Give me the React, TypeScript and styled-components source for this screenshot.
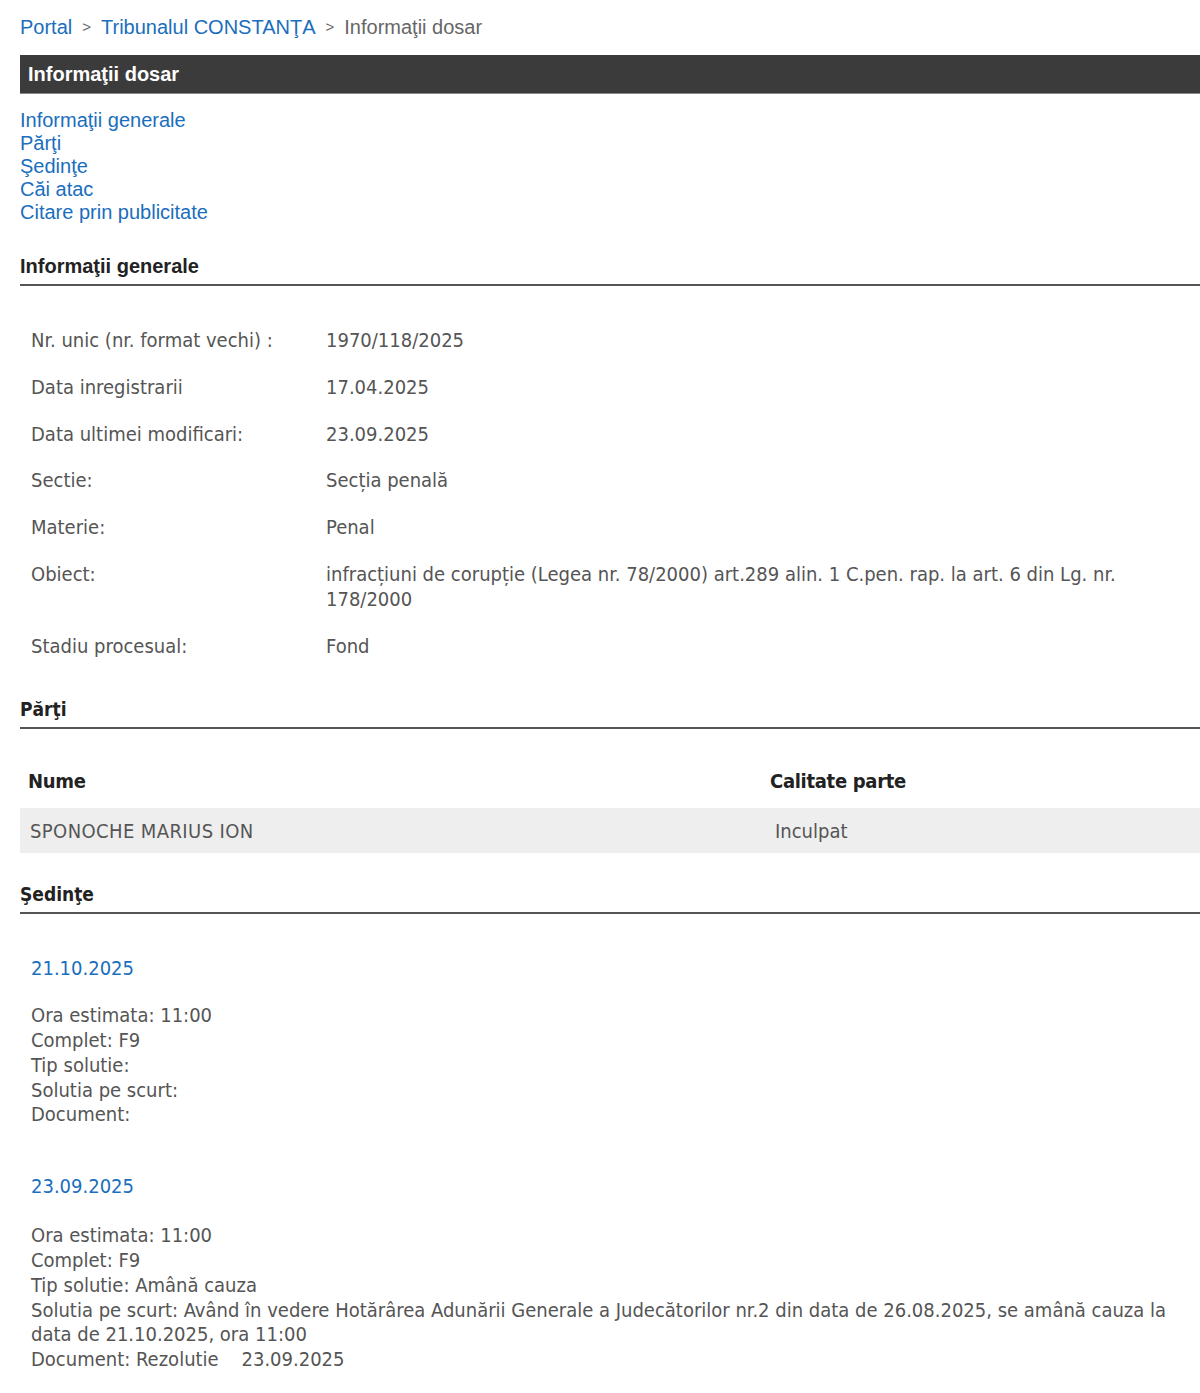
import styled, { createGlobalStyle } from "styled-components";

const GlobalStyle = createGlobalStyle`
  body {
    margin: 0;
    background: #fff;
    font-family: "Liberation Sans", Arial, sans-serif;
  }
`;

const contentFont = `"DejaVu Sans Condensed", "DejaVu Sans", sans-serif`;
const headFont = `"Liberation Sans", Arial, sans-serif`;

const Page = styled.div`
  padding: 14px 0 20px 20px;
  overflow: hidden;
`;

const Breadcrumb = styled.div`
  display: flex;
  align-items: center;
  gap: 10px;
  font-size: 20px;
  line-height: 26px;
  color: #666;
`;

const CrumbLink = styled.a`
  color: #1a6ebd;
  text-decoration: none;
`;

const Sep = styled.span`
  font-size: 15px;
  color: #666;
`;

const TitleBar = styled.div`
  margin-top: 15px;
  height: 38px;
  background: #3c3b3b;
  border-bottom: 1px solid #8a8a8a;
  color: #fff;
  font-size: 20px;
  font-weight: bold;
  line-height: 38px;
  padding-left: 8px;
`;

const Nav = styled.nav`
  display: flex;
  flex-direction: column;
  margin-top: 15px;
`;

const NavLink = styled.a`
  color: #1a6ebd;
  text-decoration: none;
  font-size: 20px;
  line-height: 23px;
`;

const SectionTitle = styled.h2<{ $top: number; $alt?: boolean }>`
  margin: ${(p) => p.$top}px 0 0;
  padding-bottom: 6px;
  border-bottom: 2px solid #555;
  font-size: ${(p) => (p.$alt ? 19 : 20)}px;
  font-weight: bold;
  line-height: 24px;
  color: #222;
  font-family: ${(p) => (p.$alt ? contentFont : headFont)};
`;

const InfoTable = styled.div`
  display: grid;
  grid-template-columns: 295px 1fr;
  padding: 31px 0 0 11px;
  font-family: ${contentFont};
  font-size: 20px;
  line-height: 25px;
  color: #555;
`;

const Cell = styled.div<{ $label?: boolean }>`
  padding: 11px ${(p) => (p.$label ? 0 : 60)}px 10.75px 0;
  white-space: ${(p) => (p.$label ? "nowrap" : "normal")};
`;

const PartyHead = styled.div`
  display: grid;
  grid-template-columns: 742px 1fr;
  margin-top: 39px;
  padding: 0 0 0 8px;
  font-family: ${contentFont};
  font-size: 20px;
  font-weight: bold;
  line-height: 26px;
  color: #222;
  letter-spacing: -0.3px;
`;

const PartyRow = styled.div`
  display: grid;
  grid-template-columns: 742px 1fr;
  margin-top: 14px;
  height: 45px;
  align-items: center;
  padding-left: 10px;
  background: #eee;
  font-family: ${contentFont};
  font-size: 20px;
  color: #555;
  letter-spacing: 0.4px;

  & > span + span {
    padding-left: 3px;
    letter-spacing: 0;
  }
`;

const Hearing = styled.div<{ $top: number }>`
  margin-top: ${(p) => p.$top}px;
  padding-left: 11px;
  font-family: ${contentFont};
  color: #555;
`;

const HearingDate = styled.a`
  display: block;
  color: #1a6ebd;
  font-size: 20px;
  line-height: 26px;
  text-decoration: none;
`;

const HearingBody = styled.div<{ $gap: number }>`
  margin-top: ${(p) => p.$gap}px;
  font-size: 20px;
  line-height: 24.8px;
`;

const info: [string, string][] = [
  ["Nr. unic (nr. format vechi) :", "1970/118/2025"],
  ["Data inregistrarii", "17.04.2025"],
  ["Data ultimei modificari:", "23.09.2025"],
  ["Sectie:", "Secția penală"],
  ["Materie:", "Penal"],
  [
    "Obiect:",
    "infracțiuni de corupție (Legea nr. 78/2000) art.289 alin. 1 C.pen. rap. la art. 6 din Lg. nr. 178/2000",
  ],
  ["Stadiu procesual:", "Fond"],
];

const hearings = [
  {
    date: "21.10.2025",
    lines: [
      "Ora estimata: 11:00",
      "Complet: F9",
      "Tip solutie:",
      "Solutia pe scurt:",
      "Document:",
    ],
  },
  {
    date: "23.09.2025",
    lines: [
      "Ora estimata: 11:00",
      "Complet: F9",
      "Tip solutie: Amână cauza",
      "Solutia pe scurt: Având în vedere Hotărârea Adunării Generale a Judecătorilor nr.2 din data de 26.08.2025, se amână cauza la data de 21.10.2025, ora 11:00",
      "Document: Rezolutie\u00a0\u00a0\u00a0\u00a023.09.2025",
    ],
  },
];

const App = () => {
  return (
    <Page>
      <GlobalStyle />
      <Breadcrumb>
        <CrumbLink href="#">Portal</CrumbLink>
        <Sep>&gt;</Sep>
        <CrumbLink href="#">Tribunalul CONSTANŢA</CrumbLink>
        <Sep>&gt;</Sep>
        <span>Informaţii dosar</span>
      </Breadcrumb>

      <TitleBar>Informaţii dosar</TitleBar>

      <Nav>
        <NavLink href="#">Informaţii generale</NavLink>
        <NavLink href="#">Părţi</NavLink>
        <NavLink href="#">Şedinţe</NavLink>
        <NavLink href="#">Căi atac</NavLink>
        <NavLink href="#">Citare prin publicitate</NavLink>
      </Nav>

      <SectionTitle $top={30}>Informaţii generale</SectionTitle>
      <InfoTable>
        {info.map(([label, value]) => (
          <>
            <Cell key={label} $label>
              {label}
            </Cell>
            <Cell key={label + "-v"}>{value}</Cell>
          </>
        ))}
      </InfoTable>

      <SectionTitle $top={28} $alt>
        Părţi
      </SectionTitle>
      <PartyHead>
        <span>Nume</span>
        <span>Calitate parte</span>
      </PartyHead>
      <PartyRow>
        <span>SPONOCHE MARIUS ION</span>
        <span>Inculpat</span>
      </PartyRow>

      <SectionTitle $top={29} $alt>
        Şedinţe
      </SectionTitle>
      {hearings.map((h, i) => (
        <Hearing key={h.date} $top={i === 0 ? 41 : 46}>
          <HearingDate href="#">{h.date}</HearingDate>
          <HearingBody $gap={i === 0 ? 22 : 24}>
            {h.lines.map((line) => (
              <div key={line}>{line}</div>
            ))}
          </HearingBody>
        </Hearing>
      ))}
    </Page>
  );
};

export default App;
